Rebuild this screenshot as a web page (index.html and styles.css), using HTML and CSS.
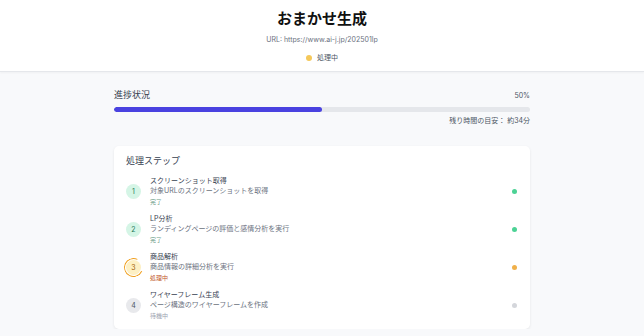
FILE: index.html
```html
<!DOCTYPE html>
<html lang="ja">
<head>
    <meta charset="UTF-8">
    <meta name="viewport" content="width=device-width, initial-scale=1.0">
    <title>おまかせ生成</title>
    <link rel="stylesheet" href="styles.css">
</head>
<body>
    <header class="header">
        <h1>おまかせ生成</h1>
        <div class="url">URL: https://www.ai-j.jp/202501lp</div>
        <div class="status"><span class="status-dot"></span>処理中</div>
    </header>

    <main class="main">
        <section class="progress">
            <div class="progress-head">
                <span class="progress-label">進捗状況</span>
                <span class="progress-pct">50%</span>
            </div>
            <div class="bar"><div class="bar-fill" style="width: 50%"></div></div>
            <div class="remaining">残り時間の目安： 約34分</div>
        </section>

        <section class="card">
            <h2>処理ステップ</h2>
            <div class="step done">
                <div class="num">1</div>
                <div class="info">
                    <div class="title">スクリーンショット取得</div>
                    <div class="desc">対象URLのスクリーンショットを取得</div>
                    <div class="state">完了</div>
                </div>
                <span class="dot"></span>
            </div>
            <div class="step done">
                <div class="num">2</div>
                <div class="info">
                    <div class="title">LP分析</div>
                    <div class="desc">ランディングページの評価と感情分析を実行</div>
                    <div class="state">完了</div>
                </div>
                <span class="dot"></span>
            </div>
            <div class="step active">
                <div class="num">3<span class="spin"></span></div>
                <div class="info">
                    <div class="title">商品解析</div>
                    <div class="desc">商品情報の詳細分析を実行</div>
                    <div class="state">処理中</div>
                </div>
                <span class="dot"></span>
            </div>
            <div class="step waiting">
                <div class="num">4</div>
                <div class="info">
                    <div class="title">ワイヤーフレーム生成</div>
                    <div class="desc">ページ構造のワイヤーフレームを作成</div>
                    <div class="state">待機中</div>
                </div>
                <span class="dot"></span>
            </div>
        </section>
    </main>
</body>
</html>
```

FILE: styles.css
```css
body {
    margin: 0;
    font-family: Inter, "Noto Sans CJK JP", sans-serif;
    background-color: #f8f9fb;
    color: #111827;
}
.header {
    background-color: white;
    height: 72px;
    box-sizing: border-box;
    padding-top: 9px;
    text-align: center;
    border-bottom: 1px solid #e5e7eb;
    box-shadow: 0 1px 2px rgba(0, 0, 0, 0.04);
}
.header h1 {
    margin: 0;
    font-size: 15px;
    line-height: 19px;
    font-weight: 600;
    color: #111;
}
.url {
    margin-top: 7px;
    font-size: 7px;
    line-height: 10px;
    color: #6b7280;
}
.status {
    margin-top: 8px;
    display: inline-flex;
    align-items: center;
    gap: 5px;
    font-size: 7px;
    line-height: 10px;
    color: #4b5563;
}
.status-dot {
    width: 6px;
    height: 6px;
    border-radius: 50%;
    background-color: #f5c85a;
}
.main {
    width: 416px;
    margin: 0 auto;
}
.progress {
    padding-top: 17px;
}
.progress-head {
    display: flex;
    justify-content: space-between;
    align-items: center;
}
.progress-label {
    font-size: 9px;
    line-height: 12px;
    color: #374151;
}
.progress-pct {
    font-size: 7px;
    color: #4b5563;
}
.bar {
    margin-top: 6px;
    height: 5px;
    border-radius: 3px;
    background-color: #e5e7eb;
    overflow: hidden;
}
.bar-fill {
    height: 100%;
    border-radius: 3px;
    background-color: #4a42e0;
}
.remaining {
    margin-top: 4px;
    text-align: right;
    font-size: 7px;
    line-height: 10px;
    color: #4b5563;
}
.card {
    margin-top: 20px;
    background-color: white;
    border-radius: 5px;
    box-shadow: 0 1px 3px rgba(0, 0, 0, 0.08);
    padding: 9px 12px 5px 12px;
}
.card h2 {
    margin: 0 0 5px 0;
    font-size: 9px;
    line-height: 12px;
    font-weight: 400;
    color: #374151;
}
.step {
    display: flex;
    align-items: center;
    height: 38px;
}
.num {
    position: relative;
    width: 15px;
    height: 15px;
    border-radius: 50%;
    display: flex;
    align-items: center;
    justify-content: center;
    font-size: 7px;
    margin-right: 9px;
    flex-shrink: 0;
}
.info {
    flex: 1;
}
.title {
    font-size: 7px;
    line-height: 10px;
    color: #374151;
}
.desc {
    font-size: 7px;
    line-height: 10px;
    color: #6b7280;
}
.state {
    font-size: 6px;
    line-height: 11px;
}
.dot {
    width: 5px;
    height: 5px;
    border-radius: 50%;
    margin-right: 1px;
}
.done .num {
    background-color: #d5f5e6;
    color: #1f7a58;
}
.done .state {
    color: #6b9a86;
}
.done .dot {
    background-color: #4cd295;
}
.active .num {
    background-color: #fdf0c4;
    color: #a16207;
}
.spin {
    position: absolute;
    inset: -2px;
    border-radius: 50%;
    border: 1.5px solid #f0a020;
    border-right-color: transparent;
    transform: rotate(-20deg);
}
.active .state {
    color: #c2592b;
}
.active .dot {
    background-color: #f0b04a;
}
.waiting .num {
    background-color: #e8e9ec;
    color: #4b5563;
}
.waiting .state {
    color: #9ca3af;
}
.waiting .dot {
    background-color: #d4d6db;
}
```
